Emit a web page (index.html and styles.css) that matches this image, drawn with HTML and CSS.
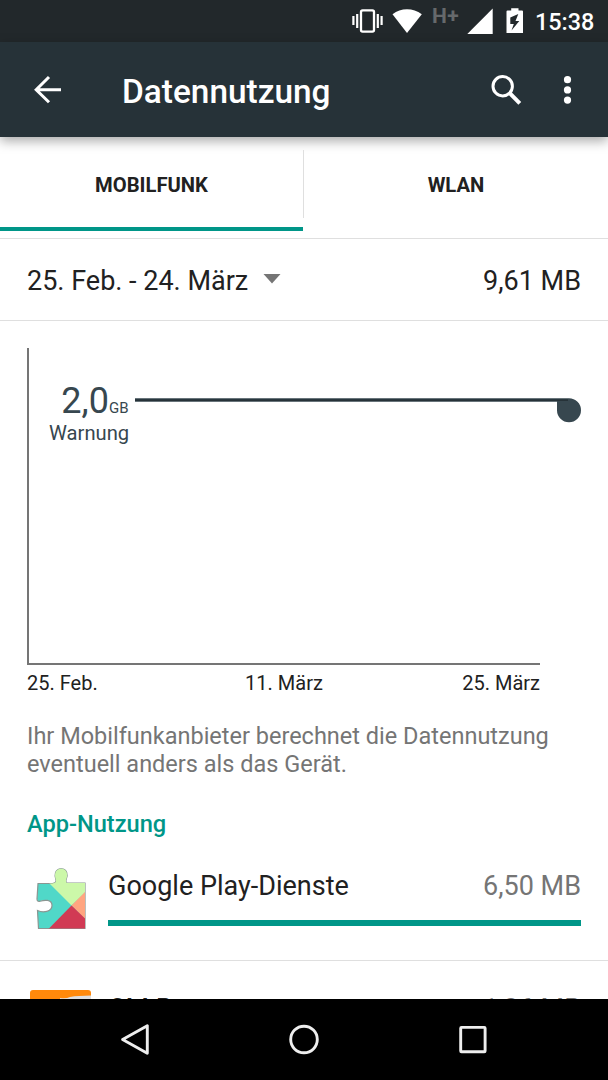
FILE: index.html
```html
<!DOCTYPE html>
<html lang="de">
<head>
<meta charset="utf-8">
<title>Datennutzung</title>
<link rel="stylesheet" href="styles.css">
</head>
<body>
<div class="screen">
  <div class="status-bar">
    <svg class="vibrate" width="32" height="42" viewBox="352 0 32 42" fill="none" stroke="#fff"><rect x="361" y="10.300" width="13" height="21.400" rx="1.600" stroke-width="2.300"/><path d="M353.400 16v9M357.200 14v14M377.800 14v14M381.600 16v9" stroke-width="2.200"/></svg>
    <svg class="wifi" width="30" height="42" viewBox="392 0 30 42" fill="#fff"><path d="M392.500 14.200Q399 9.300 407 9.300T421.800 14.200L407 33Z"/></svg>
    <span class="network">H+</span>
    <svg class="signal" width="26" height="42" viewBox="467 0 26 42" fill="#fff"><path d="M492.700 8.500V34H467.300Z"/></svg>
    <svg class="battery" width="18" height="42" viewBox="506 0 18 42"><path d="M511.200 8.300h7.300v2.200h3.500q1 0 1 1V33h-16.500V11.500q0-1 1-1h3.700Z" fill="#fff"/><path d="M518.300 14l-8 3.500v6.500h3.500l-2.300 6.500 7.800-9.500h-3.800Z" fill="#22282b"/></svg>
    <span class="clock">15:38</span>
  </div>
  <header class="app-bar">
    <svg class="back" width="30" height="30" viewBox="33 75 30 30" fill="none" stroke="#fff" stroke-width="3"><path d="M61 89.700H36M49 77L36.200 89.700 49 102.300"/></svg>
    <h1 class="title">Datennutzung</h1>
    <svg class="search" width="34" height="34" viewBox="489 72 34 34" fill="none" stroke="#fff"><circle cx="502.700" cy="85.200" r="9.700" stroke-width="3"/><path d="M509 91.500L519.800 102.300" stroke-width="4"/></svg>
    <svg class="more" width="10" height="30" viewBox="562.500 74.500 10 30" fill="#fff"><circle cx="567" cy="79.200" r="3.600"/><circle cx="567" cy="89.400" r="3.600"/><circle cx="567" cy="99.600" r="3.600"/></svg>
  </header>
  <nav class="tabs">
    <div class="tab tab-active">MOBILFUNK</div>
    <div class="tab-divider"></div>
    <div class="tab">WLAN</div>
  </nav>
  <div class="summary">
    <span>25. Feb. - 24. März</span>
    <svg class="caret" width="18" height="10" viewBox="0 0 18 10"><path d="M.5 0h17L9 9.500Z" fill="#757575"/></svg>
    <span class="total">9,61 MB</span>
  </div>
  <section class="usage">
    <div class="chart">
      <div class="limit-label">
        <div class="limit-value">2,0<small class="unit">GB</small></div>
        <div class="limit-name">Warnung</div>
      </div>
      <svg class="limit-line" width="446" height="26" viewBox="135 397 446 26" fill="#37474f"><path d="M135 398.200H569A12 12 0 1 1 557 410.200V401.800H135Z"/><path d="M135 399.200H568v1.800H135Z" fill="#263238"/></svg>
    </div>
    <div class="dates"><span>25. Feb.</span><span class="mid-date">11. März</span><span>25. März</span></div>
    <p class="disclaimer">Ihr Mobilfunkanbieter berechnet die Datennutzung eventuell anders als das Gerät.</p>
    <h2 class="section-title">App-Nutzung</h2>
    <div class="app">
      <svg class="app-icon" width="54" height="66" viewBox="34 866 54 66">
        <defs><clipPath id="piece"><path d="M38 883.500H52.500Q56.500 883 56 880C54 875 55 869 61 868.800S68.500 875 66 880C65.500 883 67 883.300 70 883H85V928.500H38.500L37.500 910.500C43 913 52 912 52 905.500S44 900 40 901.200Q37 902 37 899Z"/></clipPath></defs>
        <path d="M38 883.500H52.500Q56.500 883 56 880C54 875 55 869 61 868.800S68.500 875 66 880C65.500 883 67 883.300 70 883H85V928.500H38.500L37.500 910.500C43 913 52 912 52 905.500S44 900 40 901.200Q37 902 37 899Z" fill="#50d8c8" stroke="#8b9692" stroke-width="1.200"/>
        <g clip-path="url(#piece)"><path d="M34 866H88V889.500L71.500 905.500 50 884Z" fill="#ccf8a9"/><path d="M71.500 905.500L86 891V920Z" fill="#ffa580"/><path d="M71.500 905.500L86 919.500V930H47.500Z" fill="#d13a54"/></g>
      </svg>
      <div class="app-body">
        <div class="app-line"><span>Google Play-Dienste</span><span class="amount">6,50 MB</span></div>
        <div class="bar"></div>
      </div>
    </div>
    <div class="app app-next">
      <svg class="app-icon" width="62" height="62" viewBox="30 990 62 62"><rect x="30" y="990" width="61" height="62" rx="3" fill="#ff890b"/><path d="M60 998Q66 999 70 997 78 995.500 91 995.500V1030H60Z" fill="#dedede"/></svg>
      <div class="app-body"><div class="app-line"><span>CM B</span><span class="amount">1,26 MB</span></div></div>
    </div>
  </section>
  <footer class="nav-bar">
    <svg width="32" height="34" viewBox="119 1023 32 34" fill="none" stroke="#eee" stroke-width="2.900" stroke-linejoin="round"><path d="M147.300 1025.700V1053.300L122.600 1039.500Z"/></svg>
    <svg width="32" height="34" viewBox="288 1023 32 34" fill="none" stroke="#eee" stroke-width="2.900"><circle cx="304" cy="1039.500" r="13.300"/></svg>
    <svg width="32" height="34" viewBox="457 1023 32 34" fill="none" stroke="#eee" stroke-width="2.900"><rect x="460.700" y="1027.400" width="24.400" height="24.400" rx=".8"/></svg>
  </footer>
</div>
</body>
</html>
```
FILE: styles.css
```css
* { box-sizing: border-box; }
body { margin: 0; font-family: Roboto, sans-serif; color: #212121; background: #fff; }
svg { display: block; flex: none; }
h1, h2, p { margin: 0; }
span { white-space: nowrap; }

.screen { width: 608px; height: 1080px; overflow: hidden; display: flex; flex-direction: column; }

.status-bar { height: 42px; flex: none; background: #22282b; display: flex; padding-left: 352px; }
.wifi { margin-left: 8px; }
.network { width: 35px; margin-left: 10px; color: #66696b; font-size: 21px; font-weight: 700; line-height: 32px; letter-spacing: .3px; }
.battery { margin-left: 13px; }
.clock { margin-left: 11px; color: #fff; font-size: 23.4px; font-weight: 500; line-height: 44px; }

.app-bar { height: 95px; flex: none; background: #263238; display: flex; align-items: center; padding: 0 35px 0 33px; box-shadow: 0 4px 11px rgba(0, 0, 0, .34); }
.title { margin: 4px auto 0 59px; color: #fff; font-size: 33.4px; font-weight: 500; line-height: 40px; }
.more { margin-left: 40px; }

.tabs { height: 102px; flex: none; display: flex; padding-top: 13px; border-bottom: 1px solid #dfdfdf; }
.tab { flex: 1; height: 81px; padding-bottom: 8px; font-size: 20.2px; font-weight: 700; line-height: 70px; text-align: center; }
.tab-active { flex: none; width: 303px; border-bottom: 4px solid #009688; }
.tab-divider { width: 1px; height: 68px; background: #dfdfdf; }

.summary { height: 82px; flex: none; display: flex; align-items: center; padding: 2px 27px 0; font-size: 27px; border-bottom: 1px solid #dfdfdf; }
.caret { margin: 0 auto 4px 15px; }

.usage { height: 678px; flex: none; padding-top: 27px; overflow: hidden; }
.chart { width: 513px; height: 317px; margin-left: 27px; border: solid #757575; border-width: 0 0 2px 2px; display: flex; padding: 34px 0 0 20px; color: #37474f; }
.limit-label { width: 79.5px; text-align: right; }
.limit-value { height: 39px; font-size: 36px; line-height: 38px; white-space: nowrap; }
.unit { font-size: 15px; line-height: 1; }
.limit-name { font-size: 20.2px; line-height: 24px; }
.limit-line { margin: 15px 0 0 6.5px; }
.dates { width: 513px; margin-left: 27px; display: flex; justify-content: space-between; font-size: 20px; line-height: 24px; padding-top: 6px; }
.mid-date { margin-left: 8px; }
.disclaimer { padding: 27px 27px 0; color: #757575; font-size: 23.5px; line-height: 28px; }
.section-title { padding: 32px 27px 0; color: #009688; font-size: 23.6px; font-weight: 500; line-height: 28px; }
.app { height: 123px; display: flex; padding: 28px 27px 0 34px; border-bottom: 1px solid #dfdfdf; }
.app-body { flex: 1; margin-left: 20px; padding-top: 4px; }
.app-line { display: flex; justify-content: space-between; font-size: 27px; line-height: 33px; }
.amount { color: #757575; }
.bar { height: 6px; margin-top: 17px; background: #009688; }
.app-next { padding-left: 30px; padding-top: 29px; }
.app-next .app-body { margin-left: 16px; padding-top: 3px; }

.nav-bar { height: 81px; flex: none; background: #000; display: flex; align-items: center; justify-content: center; gap: 137px; }
```
